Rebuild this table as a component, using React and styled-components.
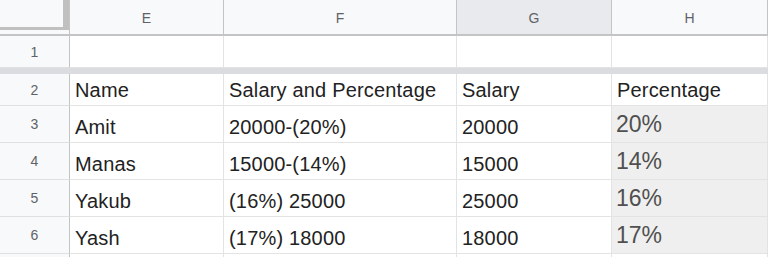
import React from "react";
import styled, { createGlobalStyle } from "styled-components";

const GlobalStyle = createGlobalStyle`
  html, body { margin: 0; padding: 0; background: #ffffff; overflow: hidden; }
  * { box-sizing: border-box; }
`;

const Sheet = styled.div`
  display: grid;
  grid-template-columns: 70px 154px 233px 155px 156px;
  grid-template-rows: 36px 32px 6px 32px repeat(4, 37px) 4px;
  width: 768px;
  height: 257px;
  overflow: hidden;
  font-family: "Liberation Sans", Arial, sans-serif;
  background: #ffffff;
`;

const Corner = styled.div`
  background: #f8f9fa;
  border-right: 1px solid #c4c4c4;
  border-bottom: 2px solid #c4c4c4;
`;

const CornerHandle = styled.div`
  width: 69px;
  height: 30px;
  border-right: 6px solid #c0c0c0;
  border-bottom: 3px solid #c0c0c0;
`;

const ColHeader = styled.div`
  display: flex;
  align-items: center;
  justify-content: center;
  background: ${(p) => (p.$selected ? "#e8eaed" : "#f8f9fa")};
  border-right: 1px solid #c4c4c4;
  border-bottom: 2px solid #c4c4c4;
  color: #5f6368;
  font-size: 14px;
  padding-top: 1px;
`;

const RowHeader = styled.div`
  display: flex;
  align-items: center;
  justify-content: center;
  background: #f8f9fa;
  border-right: 1px solid #c4c4c4;
  border-bottom: 1px solid #e0e0e0;
  color: #5f6368;
  font-size: 14px;
`;

const FreezeBar = styled.div`
  grid-column: 1 / -1;
  background: #dadce0;
`;

const Cell = styled.div`
  display: flex;
  align-items: flex-end;
  background: ${(p) => (p.$shaded ? "#efefef" : "#ffffff")};
  border-right: 1px solid #e2e3e3;
  border-bottom: 1px solid #e2e3e3;
  padding: 0 4px ${(p) => (p.$big ? "6px" : "5px")} ${(p) => (p.$big ? "4px" : "5px")};
  color: ${(p) => (p.$big ? "#505050" : "#222222")};
  font-size: ${(p) => (p.$big ? "23px" : "20px")};
  letter-spacing: ${(p) => (p.$big ? "0" : "0.18px")};
  line-height: 1;
  white-space: nowrap;
  overflow: hidden;
`;

const columns = ["E", "F", "G", "H"];

const rows = [
  { n: "2", cells: ["Name", "Salary and Percentage", "Salary", "Percentage"], header: true },
  { n: "3", cells: ["Amit", "20000-(20%)", "20000", "20%"] },
  { n: "4", cells: ["Manas", "15000-(14%)", "15000", "14%"] },
  { n: "5", cells: ["Yakub", "(16%) 25000", "25000", "16%"] },
  { n: "6", cells: ["Yash", "(17%) 18000", "18000", "17%"] },
  { n: "", cells: ["", "", "", ""], header: true },
];

export default function App() {
  return (
    <>
      <GlobalStyle />
      <Sheet>
        <Corner>
          <CornerHandle />
        </Corner>
        {columns.map((c) => (
          <ColHeader key={c} $selected={c === "G"}>
            {c}
          </ColHeader>
        ))}

        <RowHeader>1</RowHeader>
        {columns.map((c) => (
          <Cell key={"r1" + c} />
        ))}

        <FreezeBar />

        {rows.map((r, idx) => (
          <React.Fragment key={idx}>
            <RowHeader>{r.n}</RowHeader>
            {r.cells.map((v, i) => {
              const isPct = i === 3 && !r.header;
              return (
                <Cell key={idx + "-" + i} $shaded={isPct} $big={isPct}>
                  {v}
                </Cell>
              );
            })}
          </React.Fragment>
        ))}
      </Sheet>
    </>
  );
}
